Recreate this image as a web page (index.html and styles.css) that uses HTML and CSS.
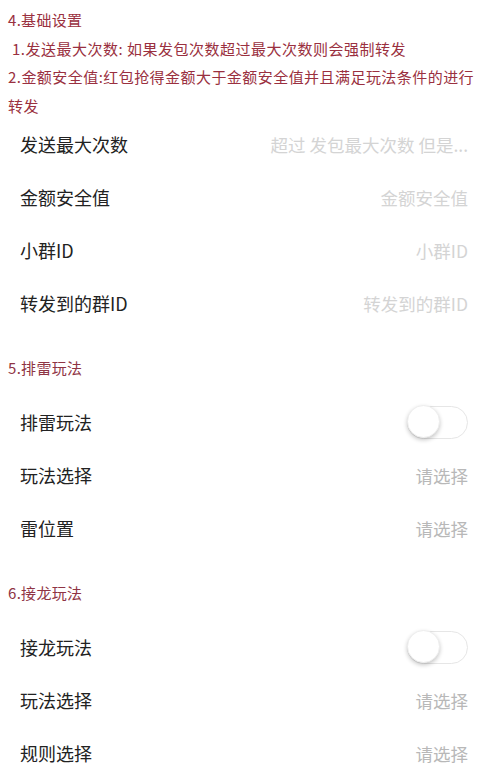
FILE: index.html
```html
<!DOCTYPE html>
<html lang="zh">
<head>
<meta charset="utf-8">
<title>设置</title>
<link rel="stylesheet" href="styles.css">
</head>
<body>
<div class="page">
  <div class="intro">
    <div class="title">4.基础设置</div>
    <div class="note note-1">1.发送最大次数: 如果发包次数超过最大次数则会强制转发</div>
    <div class="note note-2">2.金额安全值:红包抢得金额大于金额安全值并且满足玩法条件的进行转发</div>
  </div>
  <div class="list">
    <div class="row"><span class="label">发送最大次数</span><span class="hint">超过 发包最大次数 但是...</span></div>
    <div class="row"><span class="label">金额安全值</span><span class="hint">金额安全值</span></div>
    <div class="row"><span class="label">小群ID</span><span class="hint">小群ID</span></div>
    <div class="row"><span class="label">转发到的群ID</span><span class="hint">转发到的群ID</span></div>
  </div>
  <div class="section">5.排雷玩法</div>
  <div class="list">
    <div class="row"><span class="label">排雷玩法</span><span class="switch"><span class="knob"></span></span></div>
    <div class="row"><span class="label">玩法选择</span><span class="pick">请选择</span></div>
    <div class="row"><span class="label">雷位置</span><span class="pick">请选择</span></div>
  </div>
  <div class="section">6.接龙玩法</div>
  <div class="list">
    <div class="row"><span class="label">接龙玩法</span><span class="switch"><span class="knob"></span></span></div>
    <div class="row"><span class="label">玩法选择</span><span class="pick">请选择</span></div>
    <div class="row"><span class="label">规则选择</span><span class="pick">请选择</span></div>
  </div>
</div>
</body>
</html>
```
FILE: styles.css
```css
html, body {
  margin: 0;
  padding: 0;
  background: #ffffff;
}
body {
  font-family: "Noto Sans CJK SC", "Noto Sans", sans-serif;
  overflow: hidden;
  height: 779px;
}
.page {
  width: 483px;
}
.intro {
  padding: 6px 0 0 8px;
  color: #9a3040;
  font-size: 15px;
  line-height: 28.5px;
}
.title {
  letter-spacing: 0.3px;
}
.note-1 {
  padding-left: 4px;
  letter-spacing: 0.5px;
}
.note-2 {
  letter-spacing: 0.45px;
}
.section {
  height: 66px;
  box-sizing: border-box;
  padding: 22px 0 0 8px;
  line-height: 28px;
  font-size: 15px;
  letter-spacing: 0.3px;
  color: #8f3444;
}
.row {
  height: 53px;
  box-sizing: border-box;
  padding: 0 15px 5px 20px;
  display: flex;
  align-items: center;
  justify-content: space-between;
}
.label {
  font-size: 18px;
  color: #222222;
}
.hint {
  font-size: 17.5px;
  color: #d4d4d4;
}
.pick {
  font-size: 17.5px;
  color: #b8b8b8;
}
.switch {
  position: relative;
  width: 61px;
  height: 33px;
  box-sizing: border-box;
  border: 1.5px solid #e6e6e6;
  border-radius: 17px;
  background: #ffffff;
}
.knob {
  position: absolute;
  left: -1.5px;
  top: -1.5px;
  width: 33px;
  height: 33px;
  box-sizing: border-box;
  border: 1px solid #eeeeee;
  border-radius: 50%;
  background: #ffffff;
  box-shadow: 0 2px 4px rgba(0, 0, 0, 0.22);
}
```
